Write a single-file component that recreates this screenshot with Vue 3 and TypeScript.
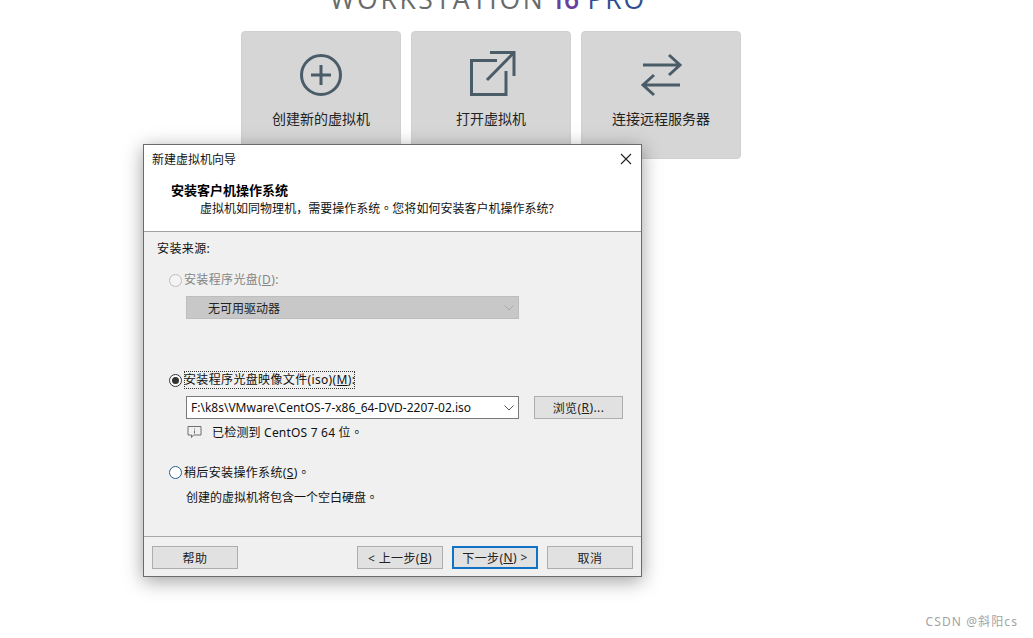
<script setup lang="ts">
const cards: { id: string; label: string }[] = [
  { id: 'new', label: '创建新的虚拟机' },
  { id: 'open', label: '打开虚拟机' },
  { id: 'remote', label: '连接远程服务器' },
]
</script>

<template>
  <div class="page">
    <div class="logo"><span class="ws">WORKSTATION</span><span class="ver">16</span><span class="pro">PRO</span></div>
    <div class="cards">
      <div v-for="c in cards" :key="c.id" class="card">
        <svg class="ico" width="60" height="60" viewBox="0 0 60 60" fill="none" stroke="#4b5c69" stroke-width="3">
          <template v-if="c.id === 'new'">
            <circle cx="30" cy="30" r="19.5" />
            <path d="M30 20v20M20 30h20" />
          </template>
          <template v-else-if="c.id === 'open'">
            <path d="M36 15.5H10.5V49.5H45V26" />
            <path d="M26 35L53 7.5" />
            <path d="M29 7.5H53V31" />
          </template>
          <template v-else>
            <path d="M12 20h36M38 10l11 10-11 10" />
            <path d="M49 40H13M23 30L12 40l11 10" />
          </template>
        </svg>
        <div class="card-label">{{ c.label }}</div>
      </div>
    </div>

    <div class="dialog">
      <div class="head">
        <div class="titlebar">
          <span>新建虚拟机向导</span>
          <svg class="close" width="12" height="12" viewBox="0 0 12 12" fill="none" stroke="#222" stroke-width="1.1">
            <path d="M1 1l10 10M11 1L1 11" />
          </svg>
        </div>
        <div class="h-title">安装客户机操作系统</div>
        <div class="h-sub">虚拟机如同物理机，需要操作系统<span class="tc">。</span>您将如何安装客户机操作系统?</div>
      </div>
      <div class="body">
        <div class="src">安装来源:</div>
        <div class="radio-row disabled r1">
          <span class="radio off"></span><span>安装程序光盘(<u>D</u>):</span>
        </div>
        <div class="select grey">
          <span>无可用驱动器</span>
          <svg width="10" height="6" viewBox="0 0 10 6" fill="none" stroke="#a8a8a8"><path d="M.5.5L5 5 9.5.5" /></svg>
        </div>
        <div class="radio-row r2">
          <span class="radio on"><i></i></span><span class="focus">安装程序光盘映像文件(iso)(<u>M</u>):</span>
        </div>
        <div class="file-row">
          <div class="select white">
            <span class="path">F:\k8s\VMware\CentOS-7-x86_64-DVD-2207-02.iso</span>
            <svg width="10" height="6" viewBox="0 0 10 6" fill="none" stroke="#555"><path d="M.5.5L5 5 9.5.5" /></svg>
          </div>
          <div class="btn browse">浏览(<u>R</u>)...</div>
        </div>
        <div class="detect">
          <svg width="15" height="14" viewBox="0 0 15 14" fill="none" stroke="#6f6f6f" stroke-width="1">
            <path d="M1 1.5h13v8.5H6.5L4.5 12.5V10H1z" />
            <path d="M7.5 3.5v1M7.5 5.5v3" />
          </svg>
          <span class="detect-text">已检测到 CentOS 7 64 位<span class="tc">。</span></span>
        </div>
        <div class="radio-row r3">
          <span class="radio blue"></span><span>稍后安装操作系统(<u>S</u>)<span class="tc">。</span></span>
        </div>
        <div class="note">创建的虚拟机将包含一个空白硬盘<span class="tc">。</span></div>
      </div>
      <div class="foot">
        <div class="btn">帮助</div>
        <div class="foot-right">
          <div class="btn">&lt; 上一步(<u>B</u>)</div>
          <div class="btn primary">下一步(<u>N</u>) &gt;</div>
          <div class="btn">取消</div>
        </div>
      </div>
    </div>

    <div class="mark">CSDN @斜阳cs</div>
  </div>
</template>

<style>
html, body { margin: 0; background: #fff; overflow: hidden; }
</style>

<style scoped>
.page {
  position: relative;
  width: 1033px;
  height: 638px;
  overflow: hidden;
  background: #fff;
  font-family: "Noto Sans", "Noto Sans CJK SC", sans-serif;
  font-size: 12px;
  color: #111;
}
.tc { font-family: "Noto Sans CJK TC", sans-serif; }
.logo {
  display: flex;
  height: 31px;
  margin-top: -16px;
  margin-bottom: 16px;
  padding-left: 330px;
  font-family: "Open Sans", sans-serif;
  font-size: 26.5px;
  line-height: 31px;
  white-space: nowrap;
}
.ws { color: #6a6a6a; letter-spacing: 2.65px; margin-right: 5px; }
.ver { color: #6a3fa0; font-weight: 600; letter-spacing: -1.5px; margin-right: 10px; }
.pro { color: #2f4f95; letter-spacing: 1.85px; }
.cards {
  display: flex;
  gap: 10px;
  padding-left: 241px;
}
.card {
  width: 160px;
  height: 128px;
  box-sizing: border-box;
  background: #d6d6d6;
  border-radius: 4px;
  border: 1px solid #d0d0d0;
  display: flex;
  flex-direction: column;
  align-items: center;
  padding-top: 13px;
}
.ico { display: block; flex: none; }
.card-label {
  margin-top: 4px;
  font-size: 14px;
  line-height: 20px;
  color: #222;
}
.dialog {
  position: absolute;
  left: 143px;
  top: 144px;
  width: 499px;
  height: 433px;
  box-sizing: border-box;
  border: 1px solid #6b6b6b;
  background: #f0f0f0;
  box-shadow: 0 4px 18px rgba(0, 0, 0, 0.38);
  display: flex;
  flex-direction: column;
}
.head {
  background: #fff;
  height: 87px;
  flex: none;
  box-sizing: border-box;
  border-bottom: 1px solid #a0a0a0;
}
.titlebar {
  display: flex;
  justify-content: space-between;
  align-items: center;
  height: 28px;
  padding: 0 9px 0 8px;
}
.h-title {
  margin: 8px 0 0 27px;
  font-size: 13px;
  font-weight: 700;
  line-height: 18px;
  color: #000;
}
.h-sub {
  margin: 0 0 0 56px;
  line-height: 18px;
  letter-spacing: 0.02px;
  color: #111;
}
.body {
  flex: 1;
  padding: 8px 0 0 13px;
  display: flex;
  flex-direction: column;
  align-items: flex-start;
}
.src { line-height: 18px; height: 18px; letter-spacing: 0.4px; }
.radio-row {
  display: flex;
  align-items: center;
  gap: 2px;
  height: 18px;
  line-height: 18px;
  margin-left: 12px;
  letter-spacing: 0.35px;
}
.r1 { margin-top: 13px; }
.r2 { margin-top: 52px; }
.r3 { margin-top: 22px; }
.disabled { color: #858585; }
.radio {
  width: 13px;
  height: 13px;
  box-sizing: border-box;
  border-radius: 50%;
  border: 1px solid #333;
  background: #fff;
  display: inline-flex;
  align-items: center;
  justify-content: center;
  flex: none;
}
.radio.off { border-color: #bdbdbd; background: #f4f4f4; }
.radio.blue { border-color: #2b5f85; }
.radio.on i {
  width: 7px;
  height: 7px;
  border-radius: 50%;
  background: #333;
  display: block;
}
.focus { outline: 1px dotted #333; outline-offset: -1px; }
.select {
  width: 333px;
  height: 23px;
  box-sizing: border-box;
  display: flex;
  align-items: center;
  justify-content: space-between;
  padding-right: 4px;
  flex: none;
}
.grey {
  margin: 7px 0 0 29px;
  background: #c8c8c8;
  border: 1px solid #bdbdbd;
  padding-left: 21px;
  color: #222;
}
.white {
  background: #fff;
  border: 1px solid #7a7a7a;
  padding-left: 4px;
}
.path { font-size: 12px; white-space: nowrap; }
.file-row {
  display: flex;
  align-items: center;
  margin: 7px 0 0 29px;
  gap: 15px;
}
.btn {
  width: 86px;
  height: 23px;
  box-sizing: border-box;
  background: #e1e1e1;
  border: 1px solid #adadad;
  display: flex;
  align-items: center;
  justify-content: center;
  white-space: nowrap;
  color: #222;
  letter-spacing: 0.4px;
}
.browse { width: 89px; height: 23px; }
.detect {
  display: flex;
  align-items: center;
  gap: 10px;
  margin: 4px 0 0 30px;
  height: 18px;
  line-height: 18px;
}
.detect-text { letter-spacing: 0.2px; }
.note { margin: 7px 0 0 29px; line-height: 18px; }
.foot {
  flex: none;
  height: 40px;
  box-sizing: border-box;
  border-top: 1px solid #a8a8a8;
  display: flex;
  justify-content: space-between;
  padding: 9px 8px 0 8px;
}
.foot-right { display: flex; gap: 9px; }
.primary { border: 2px solid #0f72c4; }
.mark {
  position: absolute;
  right: 15px;
  bottom: 7px;
  font-size: 12px;
  line-height: 18px;
  color: #a3a3a3;
  letter-spacing: 1.1px;
}
</style>
